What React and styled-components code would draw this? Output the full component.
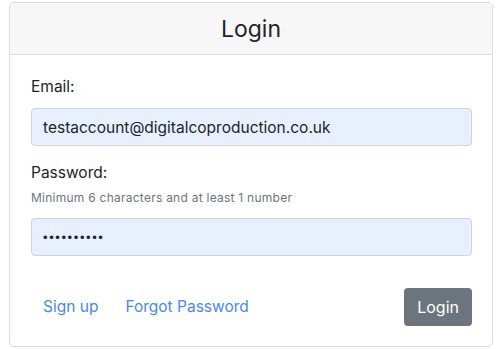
import React from "react";
import styled, { createGlobalStyle } from "styled-components";

const GlobalStyle = createGlobalStyle`
  html, body {
    margin: 0;
    padding: 0;
    background: #ffffff;
  }
  body {
    font-family: Inter, "Noto Sans", sans-serif;
    color: #212529;
  }
`;

const Page = styled.div`
  padding: 2px 9px 0 9px;
  width: 484px;
`;

const Card = styled.div`
  border: 1px solid #dcdcdc;
  border-radius: 5px;
  overflow: hidden;
  background: #fff;
`;

const CardHeader = styled.div`
  height: 51px;
  background: #f7f7f7;
  border-bottom: 1px solid #dcdcdc;
  display: flex;
  align-items: center;
  justify-content: center;
  font-size: 23px;
  color: #212529;
`;

const CardBody = styled.form`
  padding: 20px 20px 20px 21px;
  display: flex;
  flex-direction: column;
`;

const Field = styled.div`
  display: flex;
  flex-direction: column;
  margin-bottom: ${({ $gap }) => $gap || 0}px;
`;

const Label = styled.label`
  font-size: 15.5px;
  line-height: 24px;
  margin-bottom: ${({ $mb }) => $mb}px;
`;

const Hint = styled.div`
  font-size: 12px;
  letter-spacing: 0.25px;
  line-height: 16px;
  color: #6c757d;
  margin-bottom: 12px;
`;

const Input = styled.input`
  box-sizing: border-box;
  height: 38px;
  width: 100%;
  padding: 0 11px;
  border: 1px solid #ced4da;
  border-radius: 4px;
  background: #e8f0fe;
  font-family: ${({ $masked }) => ($masked ? '"Liberation Sans", sans-serif' : "inherit")};
  font-size: ${({ $masked }) => ($masked ? "13px" : "15.5px")};
  letter-spacing: ${({ $masked }) => ($masked ? "1.6px" : "normal")};
  color: #212529;
  outline: none;
`;

const Actions = styled.div`
  display: flex;
  align-items: center;
  margin-top: 32px;
`;

const LinkButton = styled.a`
  color: #4a86f7;
  font-size: 15.5px;
  line-height: 38px;
  padding: 0 12px;
  margin-right: ${({ $mr }) => $mr || 0}px;
  text-decoration: none;
  cursor: pointer;
`;

const Spacer = styled.div`
  flex: 1;
`;

const SubmitButton = styled.button`
  height: 38px;
  padding: 0 13px;
  border: none;
  border-radius: 4px;
  background: #6c757d;
  color: #fff;
  font-family: inherit;
  font-size: 16px;
  cursor: pointer;
`;

export default function App() {
  return (
    <>
      <GlobalStyle />
      <Page>
        <Card>
          <CardHeader>Login</CardHeader>
          <CardBody onSubmit={(e) => e.preventDefault()}>
            <Field $gap={15}>
              <Label $mb={9}>Email:</Label>
              <Input type="email" defaultValue="testaccount@digitalcoproduction.co.uk" />
            </Field>
            <Field>
              <Label $mb={5}>Password:</Label>
              <Hint>Minimum 6 characters and at least 1 number</Hint>
              <Input $masked type="password" defaultValue="abcdef1234" />
            </Field>
            <Actions>
              <LinkButton $mr={3}>Sign up</LinkButton>
              <LinkButton>Forgot Password</LinkButton>
              <Spacer />
              <SubmitButton type="submit">Login</SubmitButton>
            </Actions>
          </CardBody>
        </Card>
      </Page>
    </>
  );
}
